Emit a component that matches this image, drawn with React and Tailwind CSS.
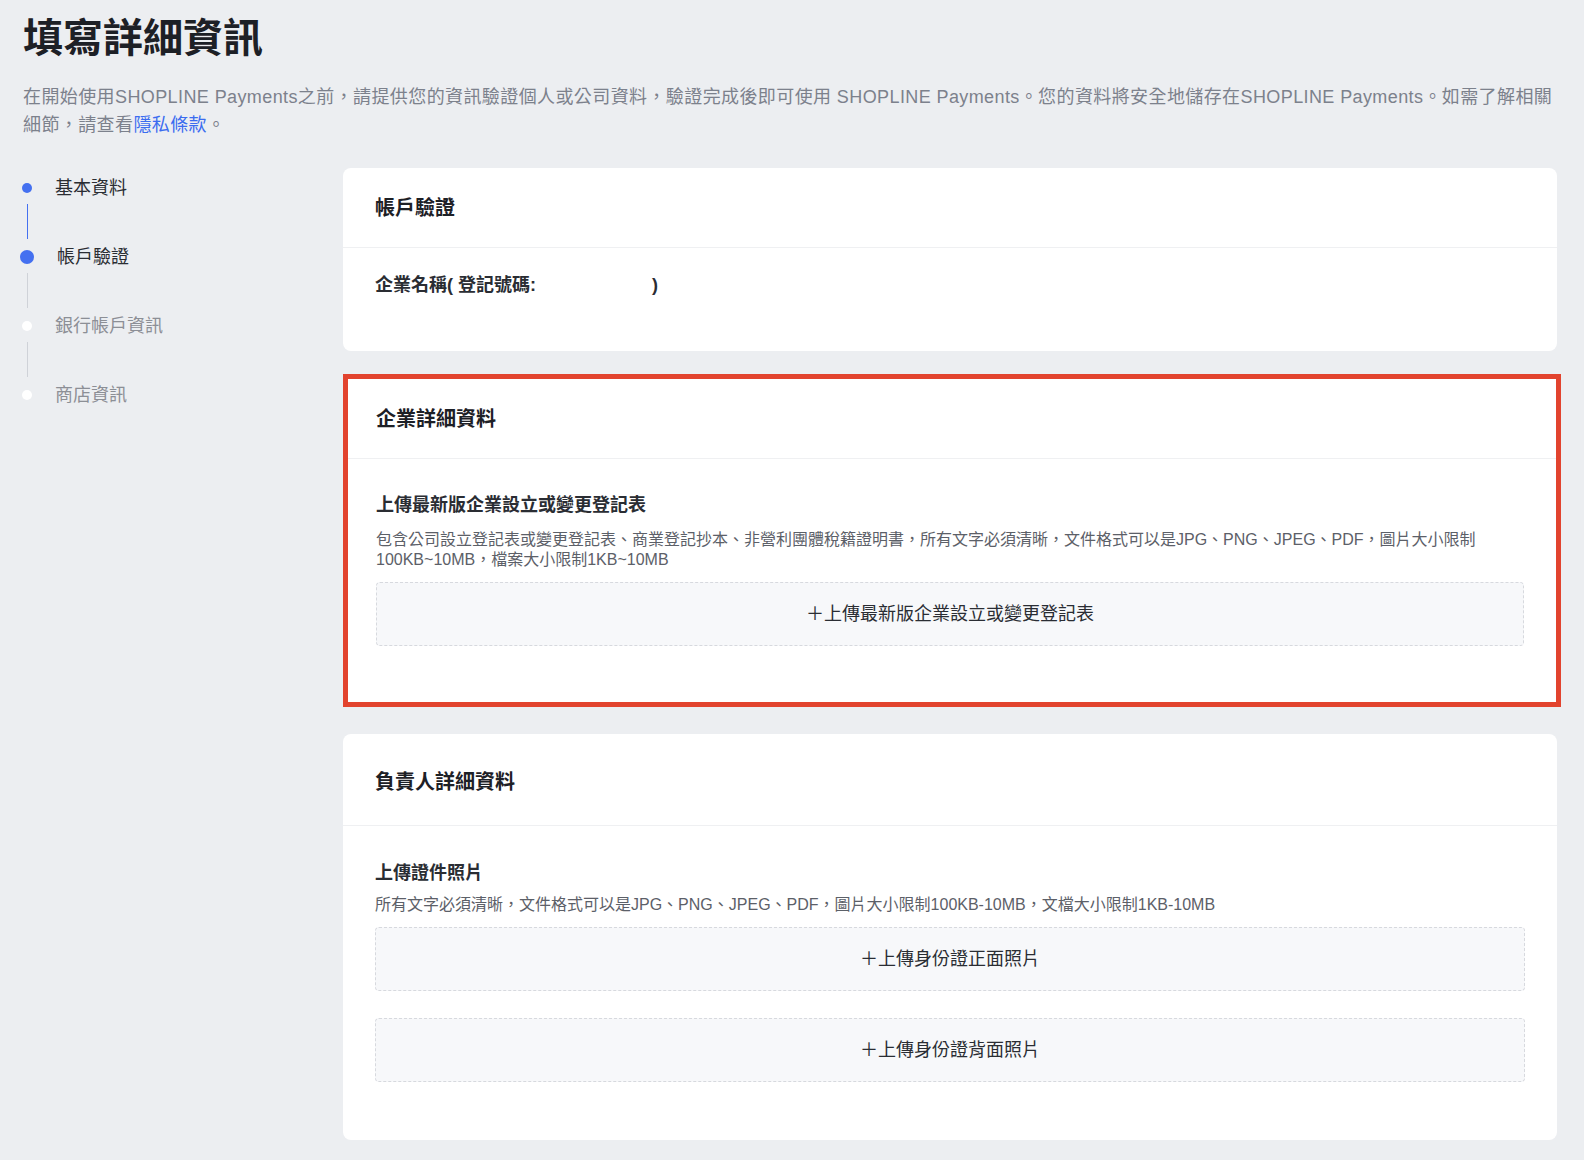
import React from 'react';

const steps = [
  { label: '基本資料', state: 'done' },
  { label: '帳戶驗證', state: 'current' },
  { label: '銀行帳戶資訊', state: 'todo' },
  { label: '商店資訊', state: 'todo' },
];

function Stepper() {
  return (
    <div className="w-[320px] shrink-0 pt-[7px]">
      {steps.map((s, i) => (
        <div key={s.label}>
          <div className="flex h-[26px] items-center">
            <div className="flex w-2 justify-center">
              {s.state === 'current' ? (
                <span className="block h-[14px] w-[14px] shrink-0 rounded-full bg-[#4470f0]" />
              ) : (
                <span
                  className={
                    s.state === 'done'
                      ? 'block h-[10px] w-[10px] shrink-0 rounded-full bg-[#4470f0]'
                      : 'block h-[10px] w-[10px] shrink-0 rounded-full bg-white'
                  }
                />
              )}
            </div>
            <span
              className={
                s.state === 'todo'
                  ? 'ml-6 text-[18px] leading-[26px] text-[#8c8f96]'
                  : s.state === 'current'
                  ? 'ml-[26px] text-[18px] leading-[26px] text-[#2a2d33]'
                  : 'ml-6 text-[18px] leading-[26px] text-[#2a2d33]'
              }
            >
              {s.label}
            </span>
          </div>
          {i < steps.length - 1 && (
            <div className="flex h-[43px] w-2 justify-center pb-[5px] pt-[3px]">
              <div className={i === 0 ? 'w-px bg-[#4470f0]' : 'w-px bg-[#cfd2d8]'} />
            </div>
          )}
        </div>
      ))}
    </div>
  );
}

function UploadBox({ children, className = '' }) {
  return (
    <div
      className={
        'flex h-[64px] items-center justify-center rounded-[4px] border border-dashed border-[#d7d9de] bg-[#f7f8fa] text-[18px] text-[#2a2d33] ' +
        className
      }
    >
      ＋{children}
    </div>
  );
}

export default function App() {
  return (
    <div className="min-h-screen bg-[#eceef1] pb-5 pl-[23px] pr-[27px] pt-[14px] [font-family:'Liberation_Sans','Noto_Sans_CJK_TC',sans-serif]">
      <h1 className="text-[40px] font-bold leading-[48px] text-[#1d2026]">填寫詳細資訊</h1>
      <p className="mt-[21px] text-[18px] leading-[28px] tracking-[0.4px] text-[#7c818c]">
        在開始使用SHOPLINE Payments之前，請提供您的資訊驗證個人或公司資料，驗證完成後即可使用 SHOPLINE Payments。您的資料將安全地儲存在SHOPLINE Payments。如需了解相關細節，請查看
        <a className="text-[#3b6cf0]">隱私條款</a>。
      </p>

      <div className="mt-[29px] flex">
        <Stepper />

        <div className="flex min-w-0 flex-1 flex-col">
          {/* 帳戶驗證 */}
          <section className="rounded-lg bg-white">
            <div className="flex h-[80px] items-center border-b border-[#eff0f2] px-8">
              <h2 className="text-[20px] font-bold text-[#1d2026]">帳戶驗證</h2>
            </div>
            <div className="px-8 pb-[53px] pt-6">
              <p className="text-[18px] font-semibold leading-[26px] text-[#2a2d33]">
                企業名稱( 登記號碼:<span className="inline-block w-[116px]" />)
              </p>
            </div>
          </section>

          {/* 企業詳細資料 */}
          <section className="-mr-1 mt-[23px] border-[5px] border-[#e2432e] bg-white">
            <div className="flex h-[80px] items-center border-b border-[#eff0f2] pl-[28px] pr-8">
              <h2 className="text-[20px] font-bold text-[#1d2026]">企業詳細資料</h2>
            </div>
            <div className="pb-[56px] pl-[28px] pr-8 pt-[33px]">
              <h3 className="text-[18px] font-semibold leading-[26px] text-[#2a2d33]">上傳最新版企業設立或變更登記表</h3>
              <p className="mt-3 text-[16px] leading-[20px] text-[#5c6068]">
                包含公司設立登記表或變更登記表、商業登記抄本、非營利團體稅籍證明書，所有文字必須清晰，文件格式可以是JPG、PNG、JPEG、PDF，圖片大小限制100KB~10MB，檔案大小限制1KB~10MB
              </p>
              <UploadBox className="mt-3">上傳最新版企業設立或變更登記表</UploadBox>
            </div>
          </section>

          {/* 負責人詳細資料 */}
          <section className="mt-[27px] rounded-lg bg-white">
            <div className="border-b border-[#eff0f2] px-8 pb-[29px] pt-[34px]">
              <h2 className="text-[20px] font-bold leading-[28px] text-[#1d2026]">負責人詳細資料</h2>
            </div>
            <div className="px-8 pb-[58px] pt-[34px]">
              <h3 className="text-[18px] font-semibold leading-[26px] text-[#2a2d33]">上傳證件照片</h3>
              <p className="mt-[9px] text-[16px] leading-[20px] text-[#5c6068]">
                所有文字必須清晰，文件格式可以是JPG、PNG、JPEG、PDF，圖片大小限制100KB-10MB，文檔大小限制1KB-10MB
              </p>
              <UploadBox className="mt-3">上傳身份證正面照片</UploadBox>
              <UploadBox className="mt-[27px]">上傳身份證背面照片</UploadBox>
            </div>
          </section>
        </div>
      </div>
    </div>
  );
}
